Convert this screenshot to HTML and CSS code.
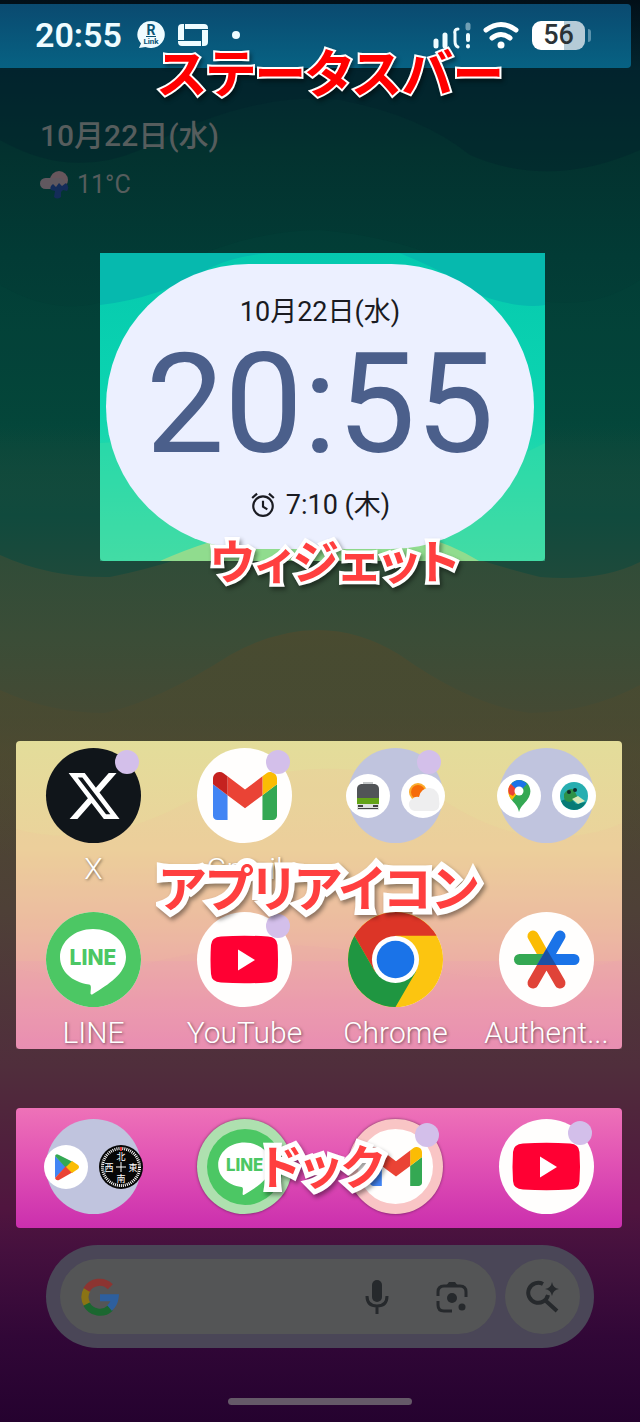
FILE: index.html
```html
<!DOCTYPE html>
<html lang="ja">
<head>
    <meta charset="UTF-8">
    <meta name="viewport" content="width=device-width, initial-scale=1.0">
    <title>ホーム画面</title>
    <link rel="stylesheet" href="styles.css">
</head>

<body>
    <!-- Shared icons -->
    <svg class="symbols" aria-hidden="true">
        <symbol id="line" viewBox="0 0 95 95">
            <circle cx="47.5" cy="47.5" r="47.5" fill="#4cc764"/>
            <path d="M47 17C28.500 17 14 29.500 14 45c0 14 11.500 25 29 27.500 2.500.5 2 3 1.500 8.500 0 1.500 1 2 2.500 1C62 72.500 80 62 80 45 80 29.500 65.500 17 47 17z" fill="#fff"/>
            <text x="47" y="53" text-anchor="middle" class="line-word">LINE</text>
        </symbol>
        <symbol id="gmail" viewBox="52 42 88 66">
            <path fill="#4285f4" d="M58 108h14V74L52 59v43c0 3.320 2.690 6 6 6"/>
            <path fill="#34a853" d="M120 108h14c3.320 0 6-2.690 6-6V59l-20 15"/>
            <path fill="#fbbc04" d="M120 48v26l20-15v-8c0-7.420-8.470-11.650-14.400-7.200"/>
            <path fill="#ea4335" d="M72 74V48l24 18 24-18v26L96 92"/>
            <path fill="#c5221f" d="M52 51v8l20 15V48l-5.600-4.200c-5.940-4.450-14.400-.22-14.400 7.200"/>
        </symbol>
        <symbol id="youtube" viewBox="0 0 95 95">
            <path d="M24 24.500q23.500-1.500 47 0Q80 25 80.500 33q1 14.500 0 29Q80 70 71 70.500q-23.500 1.500-47 0Q14.500 70 14 62q-1-14.500 0-29 .5-8 10-8.500z" fill="#ff0033"/>
            <path d="M41 37.500v21l17-10.500z" fill="#fff"/>
        </symbol>
    </svg>

    <svg class="wallpaper" viewBox="0 0 640 1422" preserveAspectRatio="none" aria-hidden="true">
        <defs>
            <linearGradient id="teal" x1="0" y1="0" x2="0" y2="1">
                <stop offset="0" stop-color="#0a4a3d" stop-opacity="0"/>
                <stop offset="0.6" stop-color="#104a3d"/>
                <stop offset="1" stop-color="#1e4a3b"/>
            </linearGradient>
            <linearGradient id="olive" x1="0" y1="0" x2="0" y2="1">
                <stop offset="0" stop-color="#494b30"/>
                <stop offset="1" stop-color="#4d4931" stop-opacity="0"/>
            </linearGradient>
        </defs>
        <path d="M0 140Q70 180 140 150 250 90 340 100 420 115 470 155 550 190 640 150V70H0z" fill="#021f2a" opacity=".35"/>
        <path d="M0 285Q70 325 130 290 230 230 320 230 430 240 500 290 580 320 640 280V400H0z" fill="#02493c" opacity=".25"/>
        <path d="M0 420H640V562Q600 582 540 577 450 555 320 500 200 560 110 577 50 578 0 555z" fill="url(#teal)"/>
        <path d="M0 690Q50 713 105 713 160 700 230 655 320 605 400 655 470 705 530 713 590 712 640 685V860H0z" fill="url(#olive)"/>
    </svg>

    <header class="status-bar">
        <span class="status-time">20:55</span>
        <svg class="icon-link" viewBox="0 0 30 30" aria-hidden="true">
            <path d="M15 1a14 13.500 0 1 1-5.500 26L3 28l2-4.500A13.800 13.500 0 0 1 15 1z" fill="#effcff"/>
            <text x="15" y="15" text-anchor="middle" class="link-r">R</text>
            <path d="M10 16.500h10" stroke="#0b5575" stroke-width="1"/>
            <text x="15" y="24" text-anchor="middle" class="link-word">Link</text>
        </svg>
        <svg class="icon-card" viewBox="0 0 30 22" aria-hidden="true">
            <path d="M4 0h22q4 0 4 4v14q0 4-4 4H4q-4 0-4-4V4q0-4 4-4zM6 5v12h18V5z" fill="#effcff" fill-rule="evenodd"/>
            <path d="M6.500 0v5M24 5.500h6M23.500 17v5M0 16.500h6" stroke="#0b5575" stroke-width="1"/>
        </svg>
        <span class="status-dot"></span>
        <div class="status-right">
            <svg class="icon-signal" viewBox="0 0 40 29" aria-hidden="true">
                <g stroke="#effcff" stroke-width="5" stroke-linecap="round">
                    <path d="M4 20v5M13 14v11"/>
                    <path d="M26 8q-4 0-3 5v7q0 5 3 6" fill="none" stroke-width="3"/>
                    <path d="M36 14v5M36 25v.5" stroke-width="4"/>
                    <path d="M36 4v3" opacity=".45"/>
                </g>
            </svg>
            <svg class="icon-wifi" viewBox="0 0 36 28" aria-hidden="true">
                <g fill="none" stroke="#fff" stroke-width="5" stroke-linecap="round">
                    <path d="M3 9Q18-2 33 9M9 17q9-7 18 0"/>
                </g>
                <circle cx="18" cy="24" r="3.500" fill="#fff"/>
            </svg>
            <span class="battery">56</span>
            <span class="battery-tip"></span>
        </div>
        <strong class="note note-status">ステータスバー</strong>
    </header>

    <section class="glance">
        <p class="glance-date">10月22日(水)</p>
        <p class="glance-weather">
            <svg viewBox="0 0 29 28" aria-hidden="true">
                <circle cx="19" cy="9" r="9" fill="#67565c"/>
                <rect y="7" width="25" height="11" rx="5.500" fill="#60585f"/>
                <path d="M13 13l3 3 3-4 3 3 4-3q4 4 1 8l-4-1-2 2v5q-4 3-7 0l1-6-4-1q-2-3 2-6z" fill="#142c59"/>
            </svg>
            11°C
        </p>
    </section>

    <section class="panel widget">
        <svg class="waves" viewBox="0 0 446 308" preserveAspectRatio="none" aria-hidden="true">
            <path d="M0 0v52Q60 45 110 15 135 3 170 0zM300 0q50 20 80 42 40 14 66 10V0z" fill="#06b9ae"/>
            <path d="M0 190Q120 180 220 230 330 250 446 190v118H0z" fill="#35dca6" opacity=".5"/>
            <path d="M60 308q90-40 160-32 90-10 160 32z" fill="#90dc8e"/>
        </svg>
        <div class="clock">
            <p class="clock-small">10月22日(水)</p>
            <p class="clock-time">20:55</p>
            <p class="clock-small">
                <svg viewBox="0 0 24 24" aria-hidden="true">
                    <g fill="none" stroke="#1a1b22" stroke-width="2">
                        <circle cx="12" cy="13" r="9"/>
                        <path d="M12 8v5.500l4 2.500M2 5.500l4.500-4M22 5.500l-4.500-4"/>
                    </g>
                </svg>
                7:10 (木)
            </p>
        </div>
        <strong class="note note-widget">ウィジェット</strong>
    </section>

    <section class="panel apps">
        <svg class="waves" viewBox="0 0 606 308" preserveAspectRatio="none" aria-hidden="true">
            <path d="M0 88Q80 110 170 62q130-60 240-15 60 45 120 50 50-2 76-15V220H0z" fill="#f0c49a" opacity=".2"/>
            <path d="M0 228q60 15 150-10 130-30 240 5 100 30 216-5v90H0z" fill="#ee9fb0" opacity=".15"/>
        </svg>
        <div class="app-grid">
            <a class="app" href="#">
                <span class="icon x-icon">
                    <svg viewBox="1 2 22 20" width="52" height="48" aria-hidden="true"><path fill="#fff" d="M18.244 2.250h3.308l-7.227 8.260 8.502 11.240H16.170l-5.214-6.817L4.990 21.750H1.680l7.730-8.835L1.254 2.250H8.080l4.713 6.231zm-1.161 17.520h1.833L7.084 4.126H5.117z"/></svg>
                    <span class="badge"></span>
                </span>
                <span class="app-name">X</span>
            </a>
            <a class="app" href="#">
                <span class="icon">
                    <svg width="64" height="48" aria-hidden="true"><use href="#gmail"/></svg>
                    <span class="badge"></span>
                </span>
                <span class="app-name">Gmail</span>
            </a>
            <a class="app" href="#" aria-label="フォルダ">
                <span class="icon folder">
                    <svg class="mini" viewBox="0 0 44 44" aria-hidden="true">
                        <circle cx="22" cy="22" r="22" fill="#fff"/>
                        <path d="M17 8h10v3H17z" fill="#c4c7c8"/>
                        <path d="M15 10h14q4 1 4 5v21H11V15q0-4 4-5z" fill="#515457"/>
                        <path d="M11 24h22v6H11z" fill="#63a318"/>
                        <path d="M11 30h22v6H11z" fill="#dfe1e1"/>
                        <path d="M12 31h5v2h-5zM27 31h5v2h-5zM12 34h20v1H12z" fill="#444"/>
                    </svg>
                    <svg class="mini" viewBox="0 0 44 44" aria-hidden="true">
                        <circle cx="22" cy="22" r="22" fill="#fff"/>
                        <circle cx="17" cy="18" r="9" fill="#fbab2c"/>
                        <circle cx="17" cy="18" r="7" fill="#f66b09"/>
                        <path d="M14 37a6.500 6.500 0 0 1-3-12q3-3 7-2a10 10 0 0 1 20 2q2 11-5 12z" fill="#eeeeef"/>
                    </svg>
                    <span class="badge"></span>
                </span>
            </a>
            <a class="app" href="#" aria-label="フォルダ">
                <span class="icon folder">
                    <svg class="mini" viewBox="0 0 44 44" aria-hidden="true">
                        <circle cx="22" cy="22" r="22" fill="#fff"/>
                        <path d="M22 38c-1-6-5-9-8-13-5-8-1-19 8-19s14 9 10 17c-3 6-8 8-10 15z" fill="#34a853"/>
                        <path d="M14 25c-5-7-2-14 0-15l8 7-7 9z" fill="#fbbc04"/>
                        <path d="M12 20q-2-6 2-10l7 5-5 7z" fill="#ea4335"/>
                        <path d="M14 10q8-8 16 0l-8 8z" fill="#1a73e8"/>
                        <circle cx="22" cy="17" r="4.500" fill="#fff"/>
                    </svg>
                    <svg class="mini" viewBox="0 0 44 44" aria-hidden="true">
                        <circle cx="22" cy="22" r="22" fill="#fff"/>
                        <circle cx="22" cy="22" r="14" fill="#27aeb0"/>
                        <path d="M9 27q9-5 15 3l10-2q-4 8-12 8-10-1-13-9z" fill="#087b76"/>
                        <path d="M12 20q5-7 10-4l4 8-8 4q-7 0-6-8z" fill="#2e9147"/>
                        <path d="M20 25l6-3 7 5-7 3z" fill="#d9e8b8"/>
                        <circle cx="17" cy="18" r="2" fill="#102c2c"/>
                        <circle cx="23" cy="16" r="2" fill="#102c2c"/>
                    </svg>
                </span>
            </a>
            <a class="app" href="#">
                <span class="icon">
                    <svg width="95" height="95" aria-hidden="true"><use href="#line"/></svg>
                </span>
                <span class="app-name">LINE</span>
            </a>
            <a class="app" href="#">
                <span class="icon">
                    <svg width="95" height="95" aria-hidden="true"><use href="#youtube"/></svg>
                    <span class="badge"></span>
                </span>
                <span class="app-name">YouTube</span>
            </a>
            <a class="app" href="#">
                <span class="icon">
                    <svg viewBox="0 0 48 48" width="95" height="95" aria-hidden="true">
                        <circle cx="24" cy="24" r="24" fill="#fcc510"/>
                        <path d="M44.780 12A24 24 0 0 0 3.220 12L13.600 30 24 12z" fill="#dc3527"/>
                        <path d="M3.220 12A24 24 0 0 0 24 48l10.390-18L13.600 30z" fill="#1f9641"/>
                        <circle cx="24" cy="24" r="11.900" fill="#fff"/>
                        <circle cx="24" cy="24" r="9.500" fill="#1a73e8"/>
                    </svg>
                </span>
                <span class="app-name">Chrome</span>
            </a>
            <a class="app" href="#">
                <span class="icon">
                    <svg viewBox="0 0 95 95" width="95" height="95" aria-hidden="true">
                        <g stroke-width="11" stroke-linecap="round">
                            <path d="M34 24l13 23" stroke="#fbbc04"/>
                            <path d="M20.500 47.500H47" stroke="#34a853"/>
                            <path d="M34 71l13.500-23.500L61 71" stroke="#e04338" fill="none"/>
                            <path d="M61 24L47.500 47.500H75" stroke="#1a73e8" fill="none"/>
                        </g>
                        <path d="M47.500 37L38 53h19z" fill="#1c50a4"/>
                    </svg>
                </span>
                <span class="app-name">Authent...</span>
            </a>
        </div>
        <strong class="note note-apps">アプリアイコン</strong>
    </section>

    <nav class="panel dock">
        <a class="app" href="#" aria-label="フォルダ">
            <span class="icon folder">
                <svg class="mini" viewBox="0 0 44 44" aria-hidden="true">
                    <circle cx="22" cy="22" r="22" fill="#fff"/>
                    <path d="M11 11v22l11-11z" fill="#4285f4"/>
                    <path d="M11 11q1-3 4-1l14 7-7 6z" fill="#34a853"/>
                    <path d="M11 33q1 3 4 2l14-8-7-6z" fill="#ea4335"/>
                    <path d="M28 16l6 4q2 2 0 4l-6 4-6-6z" fill="#fbbc04"/>
                </svg>
                <svg class="mini" viewBox="0 0 44 44" aria-hidden="true">
                    <circle cx="22" cy="22" r="22" fill="#070707"/>
                    <circle cx="22" cy="22" r="18.500" fill="none" stroke="#fff" stroke-width="3" stroke-dasharray="1 1"/>
                    <path d="M22 17v10M17 22h10" stroke="#fff" stroke-width="1"/>
                    <path d="M22 2v4" stroke="#e03030" stroke-width="2"/>
                    <g class="compass-word" text-anchor="middle">
                        <text x="22" y="15">北</text>
                        <text x="10" y="26">西</text>
                        <text x="34" y="26">東</text>
                        <text x="22" y="37">南</text>
                    </g>
                </svg>
            </span>
        </a>
        <a class="app" href="#" aria-label="LINE">
            <span class="icon ring-green">
                <svg width="76" height="76" aria-hidden="true"><use href="#line"/></svg>
            </span>
        </a>
        <a class="app" href="#" aria-label="Gmail">
            <span class="icon ring-pink">
                <svg width="52" height="39" aria-hidden="true"><use href="#gmail"/></svg>
                <span class="badge"></span>
            </span>
        </a>
        <a class="app" href="#" aria-label="YouTube">
            <span class="icon">
                <svg width="95" height="95" aria-hidden="true"><use href="#youtube"/></svg>
                <span class="badge"></span>
            </span>
        </a>
        <strong class="note note-dock">ドック</strong>
    </nav>

    <form class="search">
        <div class="search-box">
            <svg viewBox="0 0 48 48" width="38" height="38" aria-hidden="true">
                <g fill="none" stroke-width="9">
                    <path d="M8 34A19 19 0 0 1 8 14" stroke="#8a7314"/>
                    <path d="M7 15A19 19 0 0 1 37 11" stroke="#8c3431"/>
                    <path d="M7 33A19 19 0 0 0 37 38" stroke="#1b6730"/>
                    <path d="M36 38Q42 33 43 25H24" stroke="#2d5f9e"/>
                </g>
            </svg>
            <input type="text" aria-label="検索">
            <button type="button" aria-label="音声検索">
                <svg viewBox="0 0 24 34" width="24" height="34" aria-hidden="true">
                    <rect x="7" y="0" width="10" height="22" rx="5" fill="#26292c"/>
                    <path d="M2 16q0 10 10 10t10-10M12 26v8" fill="none" stroke="#26292c" stroke-width="3"/>
                </svg>
            </button>
            <button type="button" aria-label="カメラ検索">
                <svg viewBox="0 0 32 32" width="32" height="32" aria-hidden="true">
                    <path d="M2 15v-4q0-6 6-6h16q6 0 6 6v5M2 20v4q0 6 6 6h8" fill="none" stroke="#26292c" stroke-width="3"/>
                    <path d="M10 5l3-4h6l3 4z" fill="#26292c"/>
                    <circle cx="16" cy="17" r="5" fill="#26292c"/>
                    <circle cx="26" cy="26" r="3.500" fill="#26292c"/>
                </svg>
            </button>
        </div>
        <button class="ai-button" type="button" aria-label="AI モード">
            <svg viewBox="0 0 34 34" width="34" height="34" aria-hidden="true">
                <path d="M17 4A10 10 0 1 0 22 15M20 21l11 10" fill="none" stroke="#26292c" stroke-width="4"/>
                <path d="M26 2q1 6 7 7-6 1-7 7-1-6-7-7 6-1 7-7z" fill="#26292c"/>
            </svg>
        </button>
    </form>

    <div class="home-bar"></div>
</body>
</html>
```
FILE: styles.css
```css
* {
    box-sizing: border-box;
}

body {
    position: relative;
    margin: 0;
    min-height: 100vh;
    font-family: Roboto, "Noto Sans CJK JP", sans-serif;
    background: linear-gradient(
        #020f18 0%,
        #03262f 5%,
        #03322f 11%,
        #023b35 18%,
        #04463a 30%,
        #304c38 39%,
        #3b4d37 45%,
        #444a34 50%,
        #4d4931 53%,
        #4e4037 64%,
        #502e3c 75%,
        #50263c 78%,
        #50153f 85%,
        #45103e 88%,
        #310737 94%,
        #25022f 100%
    );
}

p {
    margin: 0;
}

.symbols {
    display: none;
}

.wallpaper,
.waves {
    position: absolute;
    inset: 0;
    width: 100%;
    height: 100%;
}

.status-bar,
.glance,
.panel,
.search {
    position: relative;
}

/* Status bar */
.status-bar {
    display: flex;
    align-items: center;
    height: 64px;
    top: 4px;
    margin: 0 9px 4px 0;
    padding: 0 40px 2px 35px;
    border-radius: 0 4px 4px 0;
    background: linear-gradient(#0a4a70, #076283);
}

.status-time {
    font-size: 34px;
    font-weight: 600;
    line-height: 40px;
    color: #effcff;
}

.icon-link {
    width: 30px;
    height: 30px;
    margin-left: 14px;
}

.link-r {
    font: bold 14px Roboto, sans-serif;
    fill: #0b5575;
}

.link-word {
    font: bold 8px Roboto, sans-serif;
    fill: #0b5575;
}

.icon-card {
    width: 30px;
    height: 22px;
    margin-left: 12px;
}

.status-dot {
    width: 8px;
    height: 8px;
    margin-left: 24px;
    border-radius: 50%;
    background-color: #effcff;
}

.status-right {
    display: flex;
    align-items: center;
    margin-left: auto;
}

.icon-signal {
    width: 40px;
    height: 29px;
}

.icon-wifi {
    width: 36px;
    height: 28px;
    margin: 0 13px 0 11px;
}

.battery {
    width: 53px;
    border-radius: 9px;
    background: linear-gradient(90deg, #fff 60%, #b5cbd7 60%);
    color: #2c3337;
    font-size: 27px;
    font-weight: 500;
    line-height: 29px;
    text-align: center;
}

.battery-tip {
    width: 3px;
    height: 13px;
    margin-left: 3px;
    border-radius: 0 3px 3px 0;
    background-color: #5b93ad;
}

/* Red captions drawn over the screen */
.note {
    position: absolute;
    z-index: 2;
    color: #ff3f3f;
    font-family: "Noto Sans CJK JP", sans-serif;
    font-size: 50px;
    font-weight: 700;
    font-feature-settings: "palt";
    line-height: 60px;
    white-space: nowrap;
    -webkit-text-stroke: 10px #fff;
    paint-order: stroke fill;
    stroke-linejoin: round;
    filter: drop-shadow(2px 3px 2px rgba(0, 0, 0, 0.4));
}

.note-status {
    top: 37px;
    left: 158px;
    color: #ff0000;
    font-size: 52px;
    -webkit-text-stroke-width: 4px;
}

.note-widget {
    top: 276px;
    left: 110px;
    font-size: 47px;
    -webkit-text-stroke-width: 7px;
}

.note-apps {
    top: 114px;
    left: 143px;
    -webkit-text-stroke-width: 12px;
}

.note-dock {
    top: 26px;
    left: 244px;
    font-size: 47px;
}

/* Date and weather */
.glance {
    padding: 47px 40px 0;
    color: #565d5d;
}

.glance-date {
    font-size: 30px;
    font-weight: 500;
    line-height: 42px;
}

.glance-weather {
    display: flex;
    align-items: center;
    gap: 8px;
    margin-top: 8px;
    font-size: 25px;
    line-height: 40px;
}

.glance-weather svg {
    width: 29px;
    height: 28px;
}

.panel {
    border-radius: 4px;
}

/* Clock widget */
.widget {
    margin: 48px 95px 0 100px;
    padding: 11px 11px 12px 6px;
    background: linear-gradient(#05c9af, #0cd5b0 50%, #4fdca4);
}

.clock {
    position: relative;
    padding: 30px 0 26px;
    border-radius: 143px;
    background-color: #ecf0ff;
    color: #1a1b22;
    text-align: center;
}

.clock-small {
    display: flex;
    align-items: center;
    justify-content: center;
    gap: 10px;
    font-size: 27px;
    line-height: 36px;
}

.clock-small svg {
    width: 26px;
    height: 26px;
}

.clock-time {
    margin-bottom: 8px;
    color: #4b5f8b;
    font-size: 140px;
    line-height: 149px;
}

/* App icons */
.apps {
    margin: 180px 18px 0 16px;
    padding: 7px 0 0 2px;
    background: linear-gradient(#e3dd9a, #ebd29b 35%, #ecb9a2 60%, #eb9bad 85%, #e98bb3);
}

.app-grid {
    position: relative;
    display: grid;
    grid-template-columns: repeat(4, 1fr);
    row-gap: 27px;
}

.app {
    display: flex;
    flex-direction: column;
    align-items: center;
    color: #fff;
    text-decoration: none;
}

.icon {
    position: relative;
    display: flex;
    align-items: center;
    justify-content: center;
    width: 95px;
    height: 95px;
    border-radius: 50%;
    background-color: #fffefd;
}

.icon svg {
    flex-shrink: 0;
}

.x-icon {
    background-color: #10151a;
}

.folder {
    gap: 11px;
    background-color: #c0c4de;
}

.mini {
    width: 44px;
    height: 44px;
}

.badge {
    position: absolute;
    top: 2px;
    right: 2px;
    width: 24px;
    height: 24px;
    border-radius: 50%;
    background-color: #d3bfea;
}

.app-name {
    margin-top: 10px;
    font-size: 30px;
    font-weight: 300;
    line-height: 32px;
    text-shadow: 1px 1px 3px rgba(0, 0, 0, 0.5);
}

.line-word {
    font: 800 21px Inter, sans-serif;
    fill: #4cc764;
}

/* Dock */
.dock {
    display: grid;
    grid-template-columns: repeat(4, 1fr);
    margin: 59px 18px 0 16px;
    padding: 11px 0 14px 2px;
    background: linear-gradient(#ee72b8, #e152b4 45%, #cb2fae);
}

.ring-green {
    background-color: #aee0af;
    box-shadow: 0 0 3px rgba(0, 0, 0, 0.5);
}

.ring-pink {
    border: 10px solid #f9c5c5;
    box-shadow: 0 0 3px rgba(0, 0, 0, 0.5);
}

.ring-pink .badge {
    top: -6px;
    right: -6px;
}

.compass-word {
    font: 9px "Noto Sans CJK JP", sans-serif;
    fill: #fff;
}

/* Search bar */
.search {
    display: flex;
    gap: 9px;
    margin: 17px 46px 0;
    padding: 14px;
    border-radius: 52px;
    background-color: #4a4657;
}

.search-box {
    display: flex;
    flex: 1;
    align-items: center;
    min-width: 0;
    padding: 0 7px 0 21px;
    border-radius: 38px;
    background-color: #545556;
}

.search input {
    flex: 1;
    min-width: 0;
    height: 40px;
    border: none;
    outline: none;
    background: none;
    color: #26292c;
    font-size: 26px;
}

.search button {
    display: flex;
    align-items: center;
    justify-content: center;
    width: 75px;
    height: 75px;
    padding: 0;
    border: none;
    border-radius: 50%;
    background: none;
    cursor: pointer;
}

.search .ai-button {
    background-color: #545556;
}

.home-bar {
    position: relative;
    width: 184px;
    height: 7px;
    margin: 50px auto 17px;
    border-radius: 4px;
    background-color: #655968;
}
```
